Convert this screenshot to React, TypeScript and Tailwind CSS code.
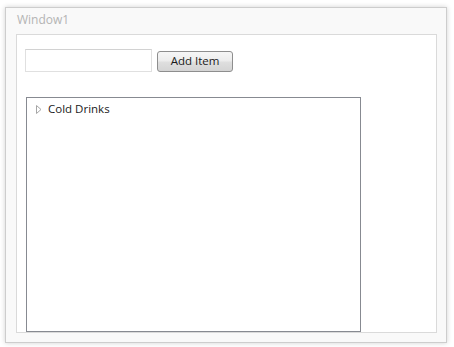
import React from "react";

export default function App() {
  const font = { fontFamily: '"Open Sans", "Noto Sans", "DejaVu Sans", sans-serif' };
  return (
    <div className="w-[454px] h-[347px] bg-white pl-[5px] pt-[7px]" style={font}>
      <div className="w-[442px] h-[336px] border border-[#cdcdcd] bg-[#f9f9f9] shadow-[0_0_5px_rgba(0,0,0,0.18)] flex flex-col pl-[10px] pr-[9px] pb-[9px]">
        <div className="h-[26px] flex items-center pl-[1px] pb-[2px] text-[12px] text-[#b4b4b4] leading-none">
          Window1
        </div>
        <div className="flex-1 border border-[#dadada] bg-white flex flex-col">
          <div className="flex items-start ml-[8px] mt-[14px]">
            <div className="w-[127px] h-[23px] border border-[#e0e0e0] border-t-[#d2d2d2] bg-white" />
            <button className="ml-[5px] mt-[2px] w-[76px] h-[21px] rounded-[3px] border border-[#8e8e8e] bg-[linear-gradient(#f6f6f6,#ececec_48%,#dfdfdf_52%,#d4d4d4)] text-[11.5px] leading-none text-[#1a1a1a] flex items-center justify-center pb-[1px]">
              Add Item
            </button>
          </div>
          <div className="ml-[9px] mt-[25px] w-[335px] flex-1 border border-[#878a91] bg-white">
            <div className="flex items-center h-[18px] mt-[2px]">
              <svg width="6" height="9" viewBox="0 0 6 9" className="ml-[9px]">
                <path d="M0.5 0.5 L5 4.5 L0.5 8.5 Z" fill="none" stroke="#a6a6a6" strokeWidth="1" />
              </svg>
              <span className="ml-[6px] text-[11.5px] text-[#1a1a1a] leading-none">Cold Drinks</span>
            </div>
          </div>
        </div>
      </div>
    </div>
  );
}
